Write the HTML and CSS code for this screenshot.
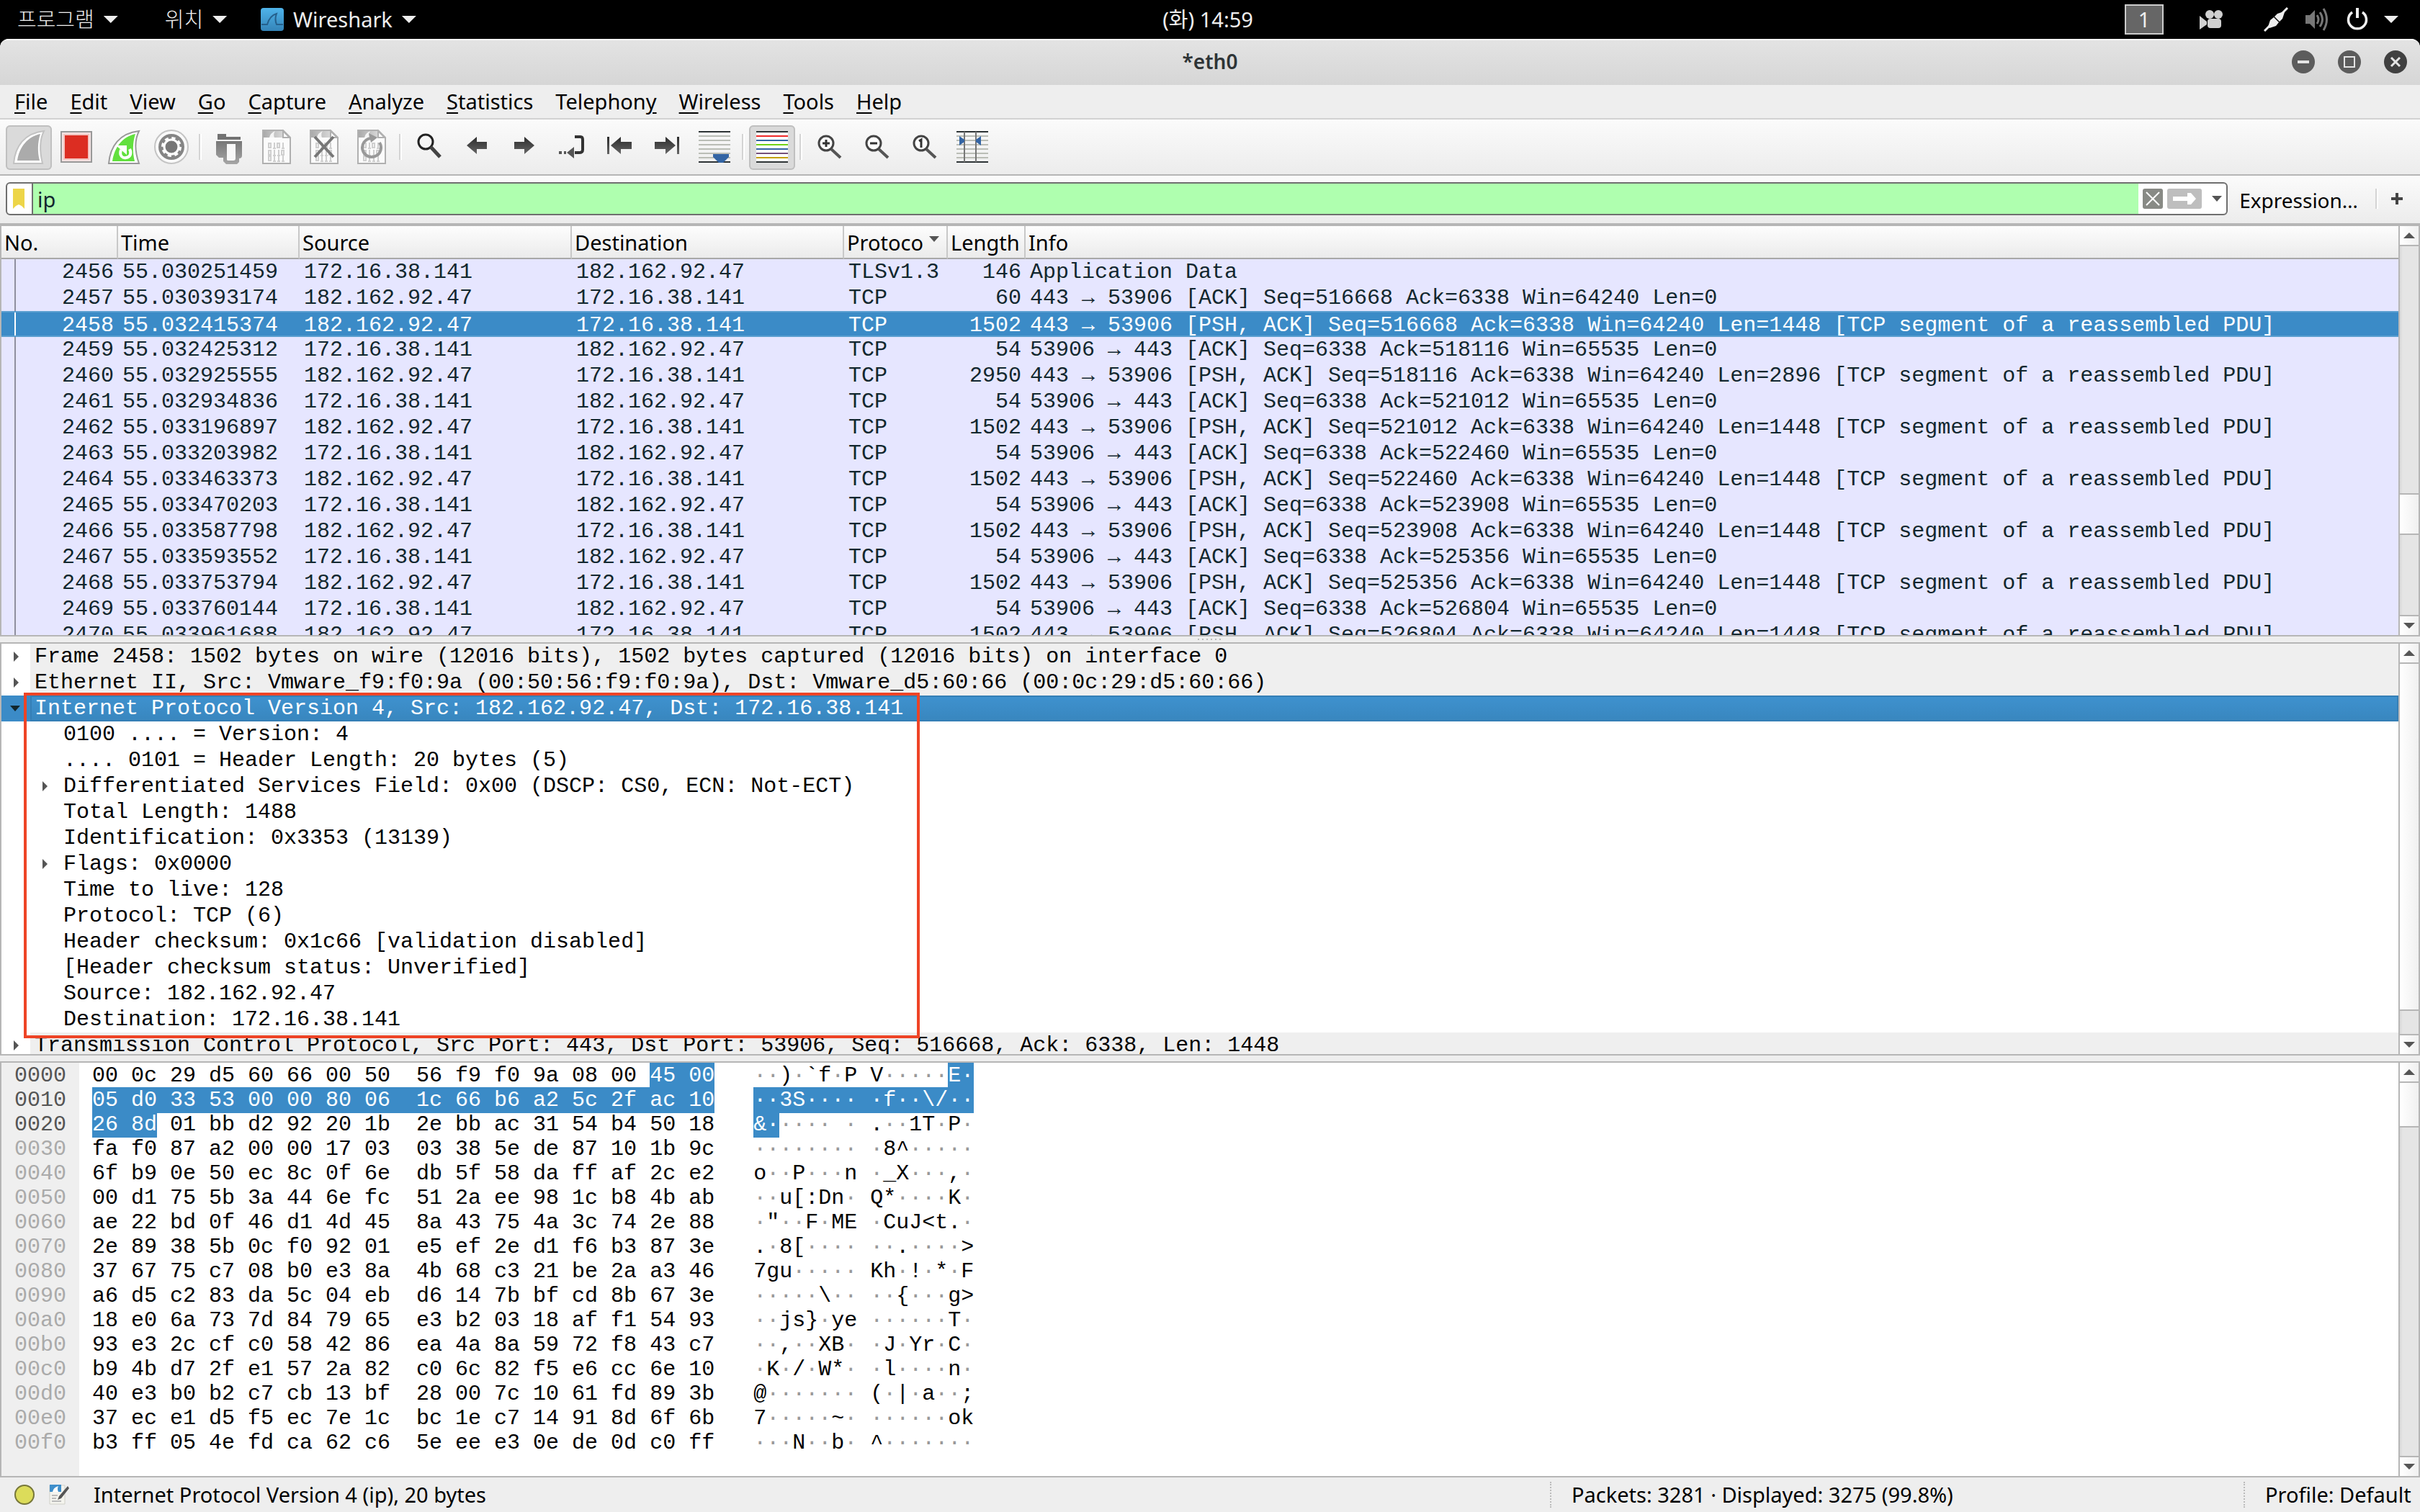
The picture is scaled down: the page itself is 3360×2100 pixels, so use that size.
FILE: index.html
```html
<!DOCTYPE html>
<html lang="ko">
<head>
<meta charset="utf-8">
<meta name="viewport" content="width=device-width, initial-scale=1">
<title>*eth0</title>
<link rel="stylesheet" href="styles.css">
</head>
<body>
<svg class="defs" aria-hidden="true">
  <defs>
    <linearGradient id="dark" x1="0" y1="0" x2="0" y2="1"><stop offset="0" stop-color="#2b2b2b"/><stop offset="1" stop-color="#666"/></linearGradient>
    <linearGradient id="folder" x1="0" y1="0" x2="0" y2="1"><stop offset="0" stop-color="#777"/><stop offset="1" stop-color="#a6a6a6"/></linearGradient>
    <linearGradient id="docTop" x1="0" y1="0" x2="1" y2="0"><stop offset="0" stop-color="#aaa"/><stop offset="1" stop-color="#d8d8d8"/></linearGradient>
    <linearGradient id="app" x1="0" y1="0" x2="0" y2="1"><stop offset="0" stop-color="#4fb4ea"/><stop offset="1" stop-color="#3484b8"/></linearGradient>
    <g id="doc">
      <path d="M13 7h28l10 10v36H13z" fill="#fbfbfb" stroke="#b0b0b0" stroke-width="2"/>
      <path d="M14 8h27v9H14z" fill="url(#docTop)"/>
      <path d="M22 17q1-6 8-9q-3 4-1 9z" fill="#f4f4f4"/>
      <path d="M41 8v9h9z" fill="#fff" stroke="#b0b0b0" stroke-width="2"/>
      <g fill="none" stroke="#cfcfcf" stroke-width="2">
        <path d="M21 25h3v6h-3zM33 25h3v6h-3zM29 24v8M27 32h4M41 24v8M39 32h4"/>
        <path d="M21 35h3v6h-3zM39 35h3v6h-3zM29 34v8M27 42h4M35 34v8M33 42h4"/>
        <path d="M21 43h3v6h-3zM29 42v8M27 50h4M35 42v8M33 50h4M41 42v8M39 50h4"/>
      </g>
    </g>
    <g id="lens">
      <circle cx="27" cy="25" r="10" fill="#fff" stroke="#444" stroke-width="3"/>
      <path d="M34 33l13 12" stroke="#555" stroke-width="4"/>
    </g>
  </defs>
</svg>

<header class="topbar">
  <nav class="topbar-left" aria-label="Desktop">
    <button class="top-item">프로그램<i class="caret"></i></button>
    <button class="top-item">위치<i class="caret"></i></button>
    <button class="top-item app-item">
      <svg width="32" height="32" viewBox="0 0 32 32"><rect width="32" height="32" rx="4" fill="url(#app)"/><path d="M1 23h8c2-7 6-13 13-15c-2 5-2 10 0 15h9" fill="none" stroke="#25608c" stroke-width="2"/></svg>
      Wireshark<i class="caret"></i></button>
  </nav>
  <time class="clock">(화) 14:59</time>
  <div class="topbar-right">
    <button class="workspace">1</button>
    <svg class="camera" width="32" height="28" viewBox="0 0 32 28" fill="#d0d0d0"><circle cx="14" cy="7" r="6"/><circle cx="26" cy="7" r="6"/><rect x="11" y="13" width="19" height="13" rx="4"/><path d="M0 9l10 8v4L0 28z"/></svg>
    <svg class="plug" width="34" height="34" viewBox="0 0 34 34"><path d="M1 33l8-8M25 9l8-8" stroke="#eee" stroke-width="3"/><path d="M6 27l3-9 5-4 7 7-4 5-9 3zM28 6l-9 3-4 4 7 7 4-4 3-9z" fill="#eee"/></svg>
    <svg class="volume" width="34" height="32" viewBox="0 0 34 32"><path d="M1 10h6l7-7v26l-7-7H1z" fill="#777"/><path d="M17 10q4 6 0 12M21 6q7 10 0 20M26 1q9 15 0 30" fill="none" stroke="#777" stroke-width="3"/></svg>
    <svg class="power" width="30" height="32" viewBox="0 0 30 32"><path d="M8 6a12.500 12.500 0 1 0 14 0" fill="none" stroke="#f0f0f0" stroke-width="3.500"/><path d="M15 0v14" stroke="#f0f0f0" stroke-width="4"/></svg>
    <i class="caret"></i>
  </div>
</header>

<main class="window">
  <div class="titlebar">
    <h1>*eth0</h1>
    <div class="win-buttons">
      <button aria-label="Minimize"><svg width="32" height="32" viewBox="0 0 32 32"><circle cx="16" cy="16" r="16" fill="#5c5c5c"/><path d="M8 16h16" stroke="#e4e4e4" stroke-width="4"/></svg></button>
      <button aria-label="Maximize"><svg width="32" height="32" viewBox="0 0 32 32"><circle cx="16" cy="16" r="16" fill="#5c5c5c"/><rect x="9" y="9" width="14" height="14" fill="none" stroke="#e4e4e4" stroke-width="2"/></svg></button>
      <button aria-label="Close"><svg width="32" height="32" viewBox="0 0 32 32"><circle cx="16" cy="16" r="16" fill="#404040"/><path d="M10 10l12 12M22 10l-12 12" stroke="#e4e4e4" stroke-width="3"/></svg></button>
    </div>
  </div>

  <nav class="menubar" aria-label="Menu">
    <button><u>F</u>ile</button><button><u>E</u>dit</button><button><u>V</u>iew</button><button><u>G</u>o</button><button><u>C</u>apture</button><button><u>A</u>nalyze</button><button><u>S</u>tatistics</button><button>Telephon<u>y</u></button><button><u>W</u>ireless</button><button><u>T</u>ools</button><button><u>H</u>elp</button>
  </nav>

  <div class="toolbar" role="toolbar" aria-label="Main toolbar">
    <button class="tool pressed" aria-label="Start capture"><svg viewBox="0 0 64 62"><path d="M11 53C13 29 26 11 53 8C47 20 47 36 51 53z" fill="#fff" stroke="#c2c2c2" stroke-width="2"/><path d="M16 49C19 30 30 16 48 12C44 24 44 38 47 49z" fill="#ababab"/></svg></button>
    <button class="tool" aria-label="Stop capture"><svg viewBox="0 0 64 62"><rect x="11" y="9" width="42" height="42" fill="#f4e2e2" stroke="#999" stroke-width="2"/><rect x="14" y="12" width="36" height="36" fill="#f3c4c0"/><rect x="16" y="14" width="32" height="32" fill="#dc2d22"/></svg></button>
    <button class="tool" aria-label="Restart capture"><svg viewBox="0 0 64 62"><path d="M11 53C13 29 26 11 53 8C47 20 47 36 53 53z" fill="#fff" stroke="#999" stroke-width="2"/><path d="M16 50C19 30 30 16 48 12C44 24 44 38 47 50z" fill="#62e03e"/><path d="M28 34c-3 9 3 12 7 11c6-1 8-6 5-12" fill="none" stroke="#fff" stroke-width="4"/><path d="M21 28h15v13z" fill="#fff"/></svg></button>
    <button class="tool" aria-label="Capture options"><svg viewBox="0 0 64 62"><circle cx="32" cy="30" r="23" fill="#fafafa" stroke="#c4c4c4" stroke-width="2"/><circle cx="32" cy="30" r="18" fill="#858585"/><circle cx="32" cy="30" r="10" fill="none" stroke="#fff" stroke-width="3"/><circle cx="32" cy="30" r="12" fill="none" stroke="#fff" stroke-width="4" stroke-dasharray="5 4.420"/><circle cx="32" cy="30" r="8" fill="#777"/></svg></button>
    <i class="tool-sep"></i>
    <button class="tool" aria-label="Open"><svg viewBox="0 0 64 62"><path d="M16 12h12v4h20v4H16z" fill="#727272"/><path d="M14 22h36v20q0 4-4 4v5l-3 3H28l-4-4v-5h-6l-4-4z" fill="url(#folder)"/><path d="M29 26h12v20q0 3-3 3h-8l-1-1z" fill="#f8f8f8"/></svg></button>
    <button class="tool" aria-label="Save"><svg viewBox="0 0 64 62"><use href="#doc"/></svg></button>
    <button class="tool" aria-label="Close file"><svg viewBox="0 0 64 62"><use href="#doc"/><path d="M19 16l26 28M45 16L19 44" stroke="#777" stroke-width="4"/></svg></button>
    <button class="tool" aria-label="Reload"><svg viewBox="0 0 64 62"><use href="#doc"/><path d="M43 24a13 13 0 1 1-12-6" fill="none" stroke="#999" stroke-width="4"/><path d="M28 11l12 6-9 7z" fill="#999"/></svg></button>
    <i class="tool-sep"></i>
    <button class="tool" aria-label="Find"><svg viewBox="0 0 64 62"><circle cx="27" cy="23" r="10" fill="none" stroke="#222" stroke-width="3"/><path d="M34 30l13 14" stroke="#444" stroke-width="5"/></svg></button>
    <button class="tool" aria-label="Previous"><svg viewBox="0 0 64 62"><path d="M18 28l14-12v7h14v10H32v7z" fill="url(#dark)"/></svg></button>
    <button class="tool" aria-label="Next"><svg viewBox="0 0 64 62"><path d="M46 28L32 16v7H18v10h14v7z" fill="url(#dark)"/></svg></button>
    <button class="tool" aria-label="Go to packet"><svg viewBox="0 0 64 62"><path d="M36 16h8q3 0 3 4v14q0 4-5 4h-6" fill="none" stroke="#333" stroke-width="4"/><path d="M25 38l10-8v16z" fill="#555"/><path d="M14 36h4v4h-4zM21 36h3v4h-3z" fill="#555"/></svg></button>
    <button class="tool" aria-label="First packet"><svg viewBox="0 0 64 62"><path d="M15 16h3v24h-3zM20 28l14-12v7h15v10H34v7z" fill="url(#dark)"/></svg></button>
    <button class="tool" aria-label="Last packet"><svg viewBox="0 0 64 62"><path d="M46 16h3v24h-3zM44 28L30 16v7H15v10h15v7z" fill="url(#dark)"/></svg></button>
    <button class="tool" aria-label="Auto scroll"><svg viewBox="0 0 64 62"><path d="M10 9h44M10 51h44" stroke="#2e3436" stroke-width="2"/><path d="M10 15h44M10 21h44M10 27h44M10 33h44M10 39h44M10 45h44" stroke="#babdb6" stroke-width="2"/><path d="M30 40h22v4l-8 8h-6l-8-8z" fill="#3465a4"/></svg></button>
    <i class="tool-sep"></i>
    <button class="tool pressed" aria-label="Colorize"><svg viewBox="0 0 64 62"><path d="M10 9h44v42H10z" fill="#fff"/><path d="M10 9h44M10 51h44" stroke="#2e3436" stroke-width="2"/><path d="M10 15h44" stroke="#ef2929" stroke-width="2"/><path d="M10 21h44M10 33h44" stroke="#3465a4" stroke-width="2"/><path d="M10 27h44" stroke="#73d216" stroke-width="2"/><path d="M10 39h44" stroke="#75507b" stroke-width="2"/><path d="M10 45h44" stroke="#c4a000" stroke-width="2"/></svg></button>
    <i class="tool-sep"></i>
    <button class="tool" aria-label="Zoom in"><svg viewBox="0 0 64 62"><use href="#lens"/><path d="M22 25h10M27 20v10" stroke="#333" stroke-width="3"/></svg></button>
    <button class="tool" aria-label="Zoom out"><svg viewBox="0 0 64 62"><use href="#lens"/><path d="M22 25h10" stroke="#333" stroke-width="3"/></svg></button>
    <button class="tool" aria-label="Normal size"><svg viewBox="0 0 64 62"><use href="#lens"/><path d="M24 22l3-2v11" fill="none" stroke="#333" stroke-width="3"/></svg></button>
    <button class="tool" aria-label="Resize columns"><svg viewBox="0 0 64 62"><path d="M10 15h44M10 21h44M10 27h44M10 33h44M10 39h44M10 45h44" stroke="#babdb6" stroke-width="2"/><path d="M10 9h44M10 51h44" stroke="#2e3436" stroke-width="2"/><path d="M21 9v42M37 9v42" stroke="#777" stroke-width="2"/><path d="M14 15l7 5v3l-7 5zM44 15l-7 5v3l7 5z" fill="#3465a4"/></svg></button>
  </div>

  <form class="filterbar">
    <div class="filter-box">
      <button type="button" class="bookmark" aria-label="Bookmarks"><svg width="16" height="28" viewBox="0 0 16 28"><path d="M0 0h16v28l-4-4-4-2-4 2-4 4z" fill="#edd548"/></svg></button>
      <input type="text" value="ip" aria-label="Display filter">
      <button type="button" aria-label="Clear"><svg width="28" height="28" viewBox="0 0 28 28"><rect width="28" height="28" rx="3" fill="#888a85"/><path d="M5 5l18 18M23 5L5 23" stroke="#fff" stroke-width="2"/></svg></button>
      <button type="button" aria-label="Apply"><svg width="48" height="28" viewBox="0 0 48 28"><rect width="48" height="28" rx="3" fill="#bebebe"/><path d="M8 11h20V6h5l7 8-7 8h-5v-5H8z" fill="#fff"/></svg></button>
      <button type="button" class="history" aria-label="Recent filters"><svg width="14" height="8" viewBox="0 0 14 8"><path d="M0 0h14L7 8z" fill="#555"/></svg></button>
    </div>
    <button type="button" class="expression">Expression…</button>
    <i class="filter-sep"></i>
    <button type="button" class="plus" aria-label="Add filter"><svg width="16" height="16" viewBox="0 0 16 16"><path d="M0 8h16M8 0v16" stroke="#444" stroke-width="4"/></svg></button>
  </form>

  <div class="panes">
    <section class="pane list-pane">
      <div class="pane-body">
        <table class="packets">
          <colgroup><col class="c-no"><col class="c-time"><col class="c-addr"><col class="c-addr"><col class="c-proto"><col class="c-len"><col></colgroup>
          <thead><tr><th>No.</th><th>Time</th><th>Source</th><th>Destination</th><th>Protoco<i class="sort"></i></th><th>Length</th><th>Info</th></tr></thead>
          <tbody>
            <tr><td>2456</td><td>55.030251459</td><td>172.16.38.141</td><td>182.162.92.47</td><td>TLSv1.3</td><td>146</td><td>Application Data</td></tr>
            <tr><td>2457</td><td>55.030393174</td><td>182.162.92.47</td><td>172.16.38.141</td><td>TCP</td><td>60</td><td>443 → 53906 [ACK] Seq=516668 Ack=6338 Win=64240 Len=0</td></tr>
            <tr class="selected"><td>2458</td><td>55.032415374</td><td>182.162.92.47</td><td>172.16.38.141</td><td>TCP</td><td>1502</td><td>443 → 53906 [PSH, ACK] Seq=516668 Ack=6338 Win=64240 Len=1448 [TCP segment of a reassembled PDU]</td></tr>
            <tr><td>2459</td><td>55.032425312</td><td>172.16.38.141</td><td>182.162.92.47</td><td>TCP</td><td>54</td><td>53906 → 443 [ACK] Seq=6338 Ack=518116 Win=65535 Len=0</td></tr>
            <tr><td>2460</td><td>55.032925555</td><td>182.162.92.47</td><td>172.16.38.141</td><td>TCP</td><td>2950</td><td>443 → 53906 [PSH, ACK] Seq=518116 Ack=6338 Win=64240 Len=2896 [TCP segment of a reassembled PDU]</td></tr>
            <tr><td>2461</td><td>55.032934836</td><td>172.16.38.141</td><td>182.162.92.47</td><td>TCP</td><td>54</td><td>53906 → 443 [ACK] Seq=6338 Ack=521012 Win=65535 Len=0</td></tr>
            <tr><td>2462</td><td>55.033196897</td><td>182.162.92.47</td><td>172.16.38.141</td><td>TCP</td><td>1502</td><td>443 → 53906 [PSH, ACK] Seq=521012 Ack=6338 Win=64240 Len=1448 [TCP segment of a reassembled PDU]</td></tr>
            <tr><td>2463</td><td>55.033203982</td><td>172.16.38.141</td><td>182.162.92.47</td><td>TCP</td><td>54</td><td>53906 → 443 [ACK] Seq=6338 Ack=522460 Win=65535 Len=0</td></tr>
            <tr><td>2464</td><td>55.033463373</td><td>182.162.92.47</td><td>172.16.38.141</td><td>TCP</td><td>1502</td><td>443 → 53906 [PSH, ACK] Seq=522460 Ack=6338 Win=64240 Len=1448 [TCP segment of a reassembled PDU]</td></tr>
            <tr><td>2465</td><td>55.033470203</td><td>172.16.38.141</td><td>182.162.92.47</td><td>TCP</td><td>54</td><td>53906 → 443 [ACK] Seq=6338 Ack=523908 Win=65535 Len=0</td></tr>
            <tr><td>2466</td><td>55.033587798</td><td>182.162.92.47</td><td>172.16.38.141</td><td>TCP</td><td>1502</td><td>443 → 53906 [PSH, ACK] Seq=523908 Ack=6338 Win=64240 Len=1448 [TCP segment of a reassembled PDU]</td></tr>
            <tr><td>2467</td><td>55.033593552</td><td>172.16.38.141</td><td>182.162.92.47</td><td>TCP</td><td>54</td><td>53906 → 443 [ACK] Seq=6338 Ack=525356 Win=65535 Len=0</td></tr>
            <tr><td>2468</td><td>55.033753794</td><td>182.162.92.47</td><td>172.16.38.141</td><td>TCP</td><td>1502</td><td>443 → 53906 [PSH, ACK] Seq=525356 Ack=6338 Win=64240 Len=1448 [TCP segment of a reassembled PDU]</td></tr>
            <tr><td>2469</td><td>55.033760144</td><td>172.16.38.141</td><td>182.162.92.47</td><td>TCP</td><td>54</td><td>53906 → 443 [ACK] Seq=6338 Ack=526804 Win=65535 Len=0</td></tr>
            <tr><td>2470</td><td>55.033961688</td><td>182.162.92.47</td><td>172.16.38.141</td><td>TCP</td><td>1502</td><td>443 → 53906 [PSH, ACK] Seq=526804 Ack=6338 Win=64240 Len=1448 [TCP segment of a reassembled PDU]</td></tr>
          </tbody>
        </table>
      </div>
      <div class="scroll"><button class="up" aria-label="Scroll up"><i></i></button><div class="track"><div class="before"></div><div class="thumb"></div><div class="after"></div></div><button class="down" aria-label="Scroll down"><i></i></button></div>
    </section>

    <div class="splitter"><i></i></div>

    <section class="pane detail-pane">
      <ul class="pane-body tree">
        <li class="layer"><button class="twist" aria-label="Expand"></button><span>Frame 2458: 1502 bytes on wire (12016 bits), 1502 bytes captured (12016 bits) on interface 0</span></li>
        <li class="layer"><button class="twist" aria-label="Expand"></button><span>Ethernet II, Src: Vmware_f9:f0:9a (00:50:56:f9:f0:9a), Dst: Vmware_d5:60:66 (00:0c:29:d5:60:66)</span></li>
        <li class="layer current"><button class="twist open" aria-label="Collapse"></button><span>Internet Protocol Version 4, Src: 182.162.92.47, Dst: 172.16.38.141</span></li>
        <li>
          <ul class="fields">
            <li><span>0100 .... = Version: 4</span></li>
            <li><span>.... 0101 = Header Length: 20 bytes (5)</span></li>
            <li><button class="twist" aria-label="Expand"></button><span>Differentiated Services Field: 0x00 (DSCP: CS0, ECN: Not-ECT)</span></li>
            <li><span>Total Length: 1488</span></li>
            <li><span>Identification: 0x3353 (13139)</span></li>
            <li><button class="twist" aria-label="Expand"></button><span>Flags: 0x0000</span></li>
            <li><span>Time to live: 128</span></li>
            <li><span>Protocol: TCP (6)</span></li>
            <li><span>Header checksum: 0x1c66 [validation disabled]</span></li>
            <li><span>[Header checksum status: Unverified]</span></li>
            <li><span>Source: 182.162.92.47</span></li>
            <li><span>Destination: 172.16.38.141</span></li>
          </ul>
        </li>
        <li class="layer"><button class="twist" aria-label="Expand"></button><span>Transmission Control Protocol, Src Port: 443, Dst Port: 53906, Seq: 516668, Ack: 6338, Len: 1448</span></li>
      </ul>
      <div class="callout"></div>
      <div class="scroll"><button class="up" aria-label="Scroll up"><i></i></button><div class="track"><div class="thumb"></div><div class="after"></div></div><button class="down" aria-label="Scroll down"><i></i></button></div>
    </section>

    <div class="splitter plain"></div>

    <section class="pane bytes-pane">
      <div class="pane-body bytes">
<pre class="offsets"><b>0000
0010
0020</b>
0030
0040
0050
0060
0070
0080
0090
00a0
00b0
00c0
00d0
00e0
00f0</pre>
<pre class="hex">00 0c 29 d5 60 66 00 50  56 f9 f0 9a 08 00 <mark>45 00</mark>
<mark>05 d0 33 53 00 00 80 06  1c 66 b6 a2 5c 2f ac 10</mark>
<mark>26 8d</mark> 01 bb d2 92 20 1b  2e bb ac 31 54 b4 50 18
fa f0 87 a2 00 00 17 03  03 38 5e de 87 10 1b 9c
6f b9 0e 50 ec 8c 0f 6e  db 5f 58 da ff af 2c e2
00 d1 75 5b 3a 44 6e fc  51 2a ee 98 1c b8 4b ab
ae 22 bd 0f 46 d1 4d 45  8a 43 75 4a 3c 74 2e 88
2e 89 38 5b 0c f0 92 01  e5 ef 2e d1 f6 b3 87 3e
37 67 75 c7 08 b0 e3 8a  4b 68 c3 21 be 2a a3 46
a6 d5 c2 83 da 5c 04 eb  d6 14 7b bf cd 8b 67 3e
18 e0 6a 73 7d 84 79 65  e3 b2 03 18 af f1 54 93
93 e3 2c cf c0 58 42 86  ea 4a 8a 59 72 f8 43 c7
b9 4b d7 2f e1 57 2a 82  c0 6c 82 f5 e6 cc 6e 10
40 e3 b0 b2 c7 cb 13 bf  28 00 7c 10 61 fd 89 3b
37 ec e1 d5 f5 ec 7e 1c  bc 1e c7 14 91 8d 6f 6b
b3 ff 05 4e fd ca 62 c6  5e ee e3 0e de 0d c0 ff</pre>
<pre class="ascii">··<b>)</b>·<b>`f</b>·<b>P V</b>·····<mark>E·</mark>
<mark>··3S···· ·f··\/··</mark>
<mark>&amp;·</mark>···· · <b>.</b>··<b>1T</b>·<b>P</b>·
········ ·<b>8^</b>·····
<b>o</b>··<b>P</b>···<b>n</b> ·<b>_X</b>···<b>,</b>·
··<b>u[:Dn</b>· <b>Q*</b>····<b>K</b>·
·<b>"</b>··<b>F</b>·<b>ME</b> ·<b>CuJ&lt;t.</b>·
<b>.</b>·<b>8[</b>···· ··<b>.</b>····<b>&gt;</b>
<b>7gu</b>····· <b>Kh</b>·<b>!</b>·<b>*</b>·<b>F</b>
·····<b>\</b>·· ··<b>{</b>···<b>g&gt;</b>
··<b>js}</b>·<b>ye</b> ······<b>T</b>·
··<b>,</b>··<b>XB</b>· ·<b>J</b>·<b>Yr</b>·<b>C</b>·
·<b>K</b>·<b>/</b>·<b>W*</b>· ·<b>l</b>····<b>n</b>·
<b>@</b>······· <b>(</b>·<b>|</b>·<b>a</b>··<b>;</b>
<b>7</b>·····<b>~</b>· ······<b>ok</b>
···<b>N</b>··<b>b</b>· <b>^</b>·······</pre>
      </div>
      <div class="scroll"><button class="up" aria-label="Scroll up"><i></i></button><div class="track"><div class="thumb"></div><div class="after"></div></div><button class="down" aria-label="Scroll down"><i></i></button></div>
    </section>
  </div>

  <footer class="statusbar">
    <svg width="28" height="28" viewBox="0 0 28 28"><circle cx="14" cy="14" r="13" fill="#dcdc5a" stroke="#77773a" stroke-width="2"/></svg>
    <svg class="note" width="28" height="28" viewBox="0 0 28 28"><path d="M1 1h21v26H1z" fill="#f4f4ee" stroke="#d0d0c8"/><path d="M1 0h16v10H1z" fill="#3f8fcb"/><path d="M5 10q1-6 8-8q-2 4 0 8z" fill="#fff"/><path d="M4 15h8M4 19h6M4 23h13" stroke="#bbb" stroke-width="2"/><path d="M26 2L14 16l-2 5 5-2L28 5z" fill="#555"/></svg>
    <span class="field-info">Internet Protocol Version 4 (ip), 20 bytes</span>
    <span class="status-cell counts">Packets: 3281 · Displayed: 3275 (99.8%)</span>
    <span class="status-cell profile">Profile: Default</span>
  </footer>
</main>
</body>
</html>
```
FILE: styles.css
```css
* { box-sizing: border-box; }

:root {
  --line: #b6b6b6;
  --accent: #3b8bc7;
  --ui: "Noto Sans", "Noto Sans CJK KR", sans-serif;
  --mono: "Liberation Mono", monospace;
}

body {
  margin: 0;
  height: 100vh;
  display: flex;
  flex-direction: column;
  overflow: hidden;
  background: #000;
  color: #111;
  font: 29px/36px var(--ui);
}

button {
  margin: 0;
  padding: 0;
  border: 0;
  background: none;
  color: inherit;
  font: inherit;
}

svg { display: block; }
ul { margin: 0; padding: 0; list-style: none; }
pre { margin: 0; font: inherit; }
.defs { position: absolute; width: 0; height: 0; }

/* Desktop bar */
.topbar {
  display: grid;
  grid-template-columns: 1fr auto 1fr;
  align-items: center;
  height: 54px;
  padding: 0 30px 0 24px;
  color: #eee;
}
.topbar-left { display: flex; gap: 65px; }
.top-item { display: flex; align-items: center; gap: 13px; font-weight: 300; }
.app-item { margin-left: -18px; font-weight: 400; }
.caret {
  width: 20px;
  height: 10px;
  background: #eee;
  clip-path: polygon(0 0, 100% 0, 50% 100%);
}
.topbar-right { display: flex; justify-content: flex-end; align-items: center; }
.workspace {
  width: 54px;
  height: 42px;
  border: 2px solid #ccc;
  background: #666;
  line-height: 38px;
}
.camera { margin-left: 50px; }
.plug { margin-left: 57px; }
.volume { margin-left: 23px; }
.power { margin: 0 22px 0 24px; }

/* Window frame */
.window {
  flex: 1;
  min-height: 0;
  display: flex;
  flex-direction: column;
  border-radius: 12px 12px 0 0;
  overflow: hidden;
  background: #eee;
}
.titlebar {
  display: grid;
  grid-template-columns: 1fr auto 1fr;
  align-items: center;
  height: 64px;
  border-top: 2px solid #fafafa;
  background: linear-gradient(#e3e3e3, #d6d6d6);
}
.titlebar h1 { grid-column: 2; margin: 0; padding-bottom: 4px; font-size: 28px; font-weight: 600; color: #2e3436; }
.win-buttons { display: flex; justify-content: flex-end; gap: 32px; padding: 0 18px 2px 0; }

.menubar {
  display: flex;
  height: 48px;
  padding-left: 4px;
  border-bottom: 2px solid #d2d2d2;
  color: #000;
}
.menubar button { padding: 0 15px 0 16px; line-height: 46px; }
.menubar u { text-underline-offset: 4px; text-decoration-thickness: 2px; }

.toolbar {
  display: flex;
  gap: 2px;
  height: 78px;
  padding: 8px;
  border-bottom: 2px solid var(--line);
  background: linear-gradient(#fbfbfb, #ececec);
}
.tool { width: 64px; height: 62px; border-radius: 6px; }
.tool svg { width: 64px; height: 62px; }
.pressed { background: #dadada; box-shadow: inset 0 0 0 2px #c0c0c0; }
.tool-sep {
  width: 12px;
  margin: 12px 0;
  background: linear-gradient(90deg, #d4d4d4 50%, #fff 50%) center / 4px 100% no-repeat;
}

.filterbar {
  display: flex;
  align-items: center;
  height: 68px;
  padding: 0 24px 2px 8px;
  border-bottom: 2px solid var(--line);
  background: linear-gradient(#fbfbfb, #ececec);
}
.filter-box {
  flex: 1;
  display: flex;
  align-items: center;
  gap: 6px;
  height: 46px;
  padding-right: 6px;
  border: 2px solid #6f6f6f;
  border-radius: 6px;
  overflow: hidden;
  background: #fff;
}
.bookmark { padding: 0 10px 0 8px; }
.filter-box input {
  flex: 1;
  align-self: stretch;
  margin-left: -6px;
  padding: 2px 6px 0;
  border: 0;
  border-left: 2px solid #6f6f6f;
  background: #afffaf;
  color: #12272e;
  font: inherit;
}
.history { padding-left: 8px; }
.expression { margin-left: 16px; padding-top: 4px; color: #000; font-size: 28px; }
.filter-sep {
  width: 4px;
  height: 28px;
  margin: 0 18px 0 24px;
  background: linear-gradient(90deg, #d4d4d4 50%, #fff 50%);
}

/* Panes */
.panes { flex: 1; min-height: 0; display: flex; flex-direction: column; }
.pane {
  position: relative;
  display: flex;
  min-height: 0;
  border: 2px solid var(--line);
  background: #fff;
  font: 30px/36px var(--mono);
}
.list-pane { flex: 572 0 0; }
.detail-pane { flex: 574 0 0; }
.bytes-pane { flex: 578 0 0; }
.pane-body { flex: 1; min-width: 0; overflow: hidden; }
.splitter { display: flex; justify-content: center; align-items: center; height: 8px; }
.splitter i { width: 34px; height: 2px; background: repeating-linear-gradient(90deg, #bbb 0 2px, #eee 2px 6px); }

.packets {
  width: 100%;
  table-layout: fixed;
  border-collapse: separate;
  border-spacing: 0;
  background: #e6e6ff linear-gradient(#8f8f9f, #8f8f9f) 18px 46px / 2px 100% no-repeat;
  color: #12272e;
}
.c-no { width: 162px; }
.c-time { width: 252px; }
.c-addr { width: 378px; }
.c-proto { width: 144px; }
.c-len { width: 108px; }
.packets th {
  height: 46px;
  padding: 2px 0 0 4px;
  border-right: 2px solid #c8c8c8;
  border-bottom: 2px solid #a8a8a8;
  background: linear-gradient(#fdfdfd, #ebebeb);
  color: #000;
  font: 29px/42px var(--ui);
  text-align: left;
  white-space: nowrap;
}
.packets th:last-child { border-right: 0; }
.packets td { height: 36px; padding: 0 0 0 6px; line-height: 36px; white-space: pre; }
.packets td:nth-child(1), .packets td:nth-child(6) { padding-right: 6px; text-align: right; }
.packets .selected td {
  padding-top: 4px;
  background: var(--accent);
  box-shadow: inset 0 2px #5a9fd0, inset 0 -2px #5a9fd0;
  color: #fff;
  line-height: 32px;
}
.packets .selected td:first-child {
  background: linear-gradient(#fff, #fff) 18px 0 / 2px 100% no-repeat var(--accent);
}
.sort {
  display: inline-block;
  width: 14px;
  height: 8px;
  margin: 0 0 12px 8px;
  background: #555;
  clip-path: polygon(0 0, 100% 0, 50% 100%);
}

.tree { color: #000; }
.tree li { position: relative; }
.tree span { display: block; height: 36px; padding-left: 6px; white-space: pre; }
.layer { padding-left: 40px; }
.layer span { background: #efefef; }
.current { background: var(--accent); color: #fff; }
.current span { background: linear-gradient(#3f92cf, #3886be); box-shadow: inset 0 0 0 2px #357fb6; }
.fields { padding-left: 80px; }
.twist {
  position: absolute;
  left: 17px;
  top: 11px;
  width: 7px;
  height: 14px;
  background: #555;
  clip-path: polygon(0 0, 100% 50%, 0 100%);
}
.twist.open { left: 12px; top: 14px; width: 14px; height: 8px; background: #12272e; clip-path: polygon(0 0, 100% 0, 50% 100%); }
.fields .twist { left: -23px; }
.callout {
  position: absolute;
  left: 31px;
  top: 68px;
  width: 1244px;
  height: 480px;
  border: 4px solid #ee4426;
}

.bytes { display: flex; color: #000; line-height: 34px; }
.bytes pre { padding-top: 1px; }
.bytes b { font-weight: 400; color: #000; }
.bytes mark { padding: 1px 0; background: var(--accent); color: #fff; }
.offsets { width: 108px; padding-left: 18px; background: #efefef; color: #aaa; }
.bytes .offsets b { color: #555; }
.hex { margin-left: 18px; }
.ascii { margin-left: 54px; color: #999; }

/* Scroll bars */
.scroll {
  display: flex;
  flex-direction: column;
  width: 28px;
  border-left: 2px solid var(--line);
  background: linear-gradient(90deg, #d8d8d8, #e5e5e5 4px);
}
.scroll button { display: grid; place-items: center; height: 28px; background: linear-gradient(90deg, #fff, #f0f0f0); }
.scroll .up { border-bottom: 2px solid var(--line); }
.scroll .down { border-top: 2px solid var(--line); }
.scroll button i { width: 16px; height: 8px; background: #555; clip-path: polygon(0 100%, 50% 0, 100% 100%); }
.scroll .down i { clip-path: polygon(0 0, 100% 0, 50% 100%); }
.track { flex: 1; display: flex; flex-direction: column; }
.thumb { border-bottom: 2px solid var(--line); background: linear-gradient(90deg, #fff, #f0f0f0); }
.list-pane .before { flex: 346; border-bottom: 2px solid var(--line); }
.list-pane .thumb { flex: 54; }
.list-pane .after { flex: 112; }
.detail-pane .thumb { flex: 482; }
.detail-pane .after { flex: 32; }
.bytes-pane .thumb { flex: 60; }
.bytes-pane .after { flex: 458; }

.statusbar { display: flex; align-items: center; height: 48px; padding-left: 20px; color: #000; }
.note { margin: 0 34px 0 20px; }
.field-info { flex: 1; }
.status-cell { padding-left: 28px; border-left: 2px dotted #bbb; }
.counts { width: 963px; }
.profile { width: 245px; }
```
